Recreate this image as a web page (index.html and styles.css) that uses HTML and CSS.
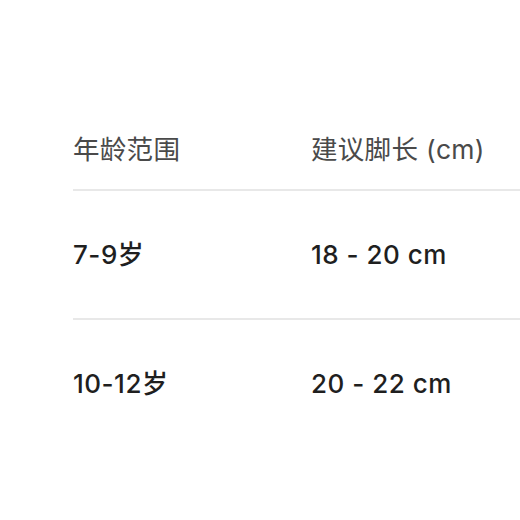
FILE: index.html
```html
<!DOCTYPE html>
<html lang="zh">
<head>
<meta charset="utf-8">
<link rel="stylesheet" href="styles.css">
</head>
<body>
<div class="table">
  <div class="row head">
    <div class="cell">年龄范围</div>
    <div class="cell">建议脚长 (cm)</div>
  </div>
  <div class="row">
    <div class="cell">7-9岁</div>
    <div class="cell">18 - 20 cm</div>
  </div>
  <div class="row">
    <div class="cell">10-12岁</div>
    <div class="cell">20 - 22 cm</div>
  </div>
</div>
</body>
</html>
```
FILE: styles.css
```css
html, body {
  margin: 0;
  padding: 0;
  background: #ffffff;
  overflow: hidden;
}
body {
  font-family: Inter, "Noto Sans CJK SC", sans-serif;
  font-size: 26px;
  font-weight: 500;
  color: #1f1f1f;
}
.table {
  margin-left: 73px;
  padding-top: 134px;
  width: 447px;
}
.row {
  display: grid;
  grid-template-columns: 238px 1fr;
  align-items: center;
  height: 127px;
  border-bottom: 2px solid #e8e8e8;
  line-height: 31px;
  letter-spacing: 0.5px;
}
.row:last-child {
  border-bottom: none;
}
.row.head {
  height: auto;
  padding-bottom: 24px;
  color: #4a4a4a;
  font-weight: 400;
  font-size: 26.5px;
  letter-spacing: 0.3px;
}
.cell {
  white-space: nowrap;
}
```
